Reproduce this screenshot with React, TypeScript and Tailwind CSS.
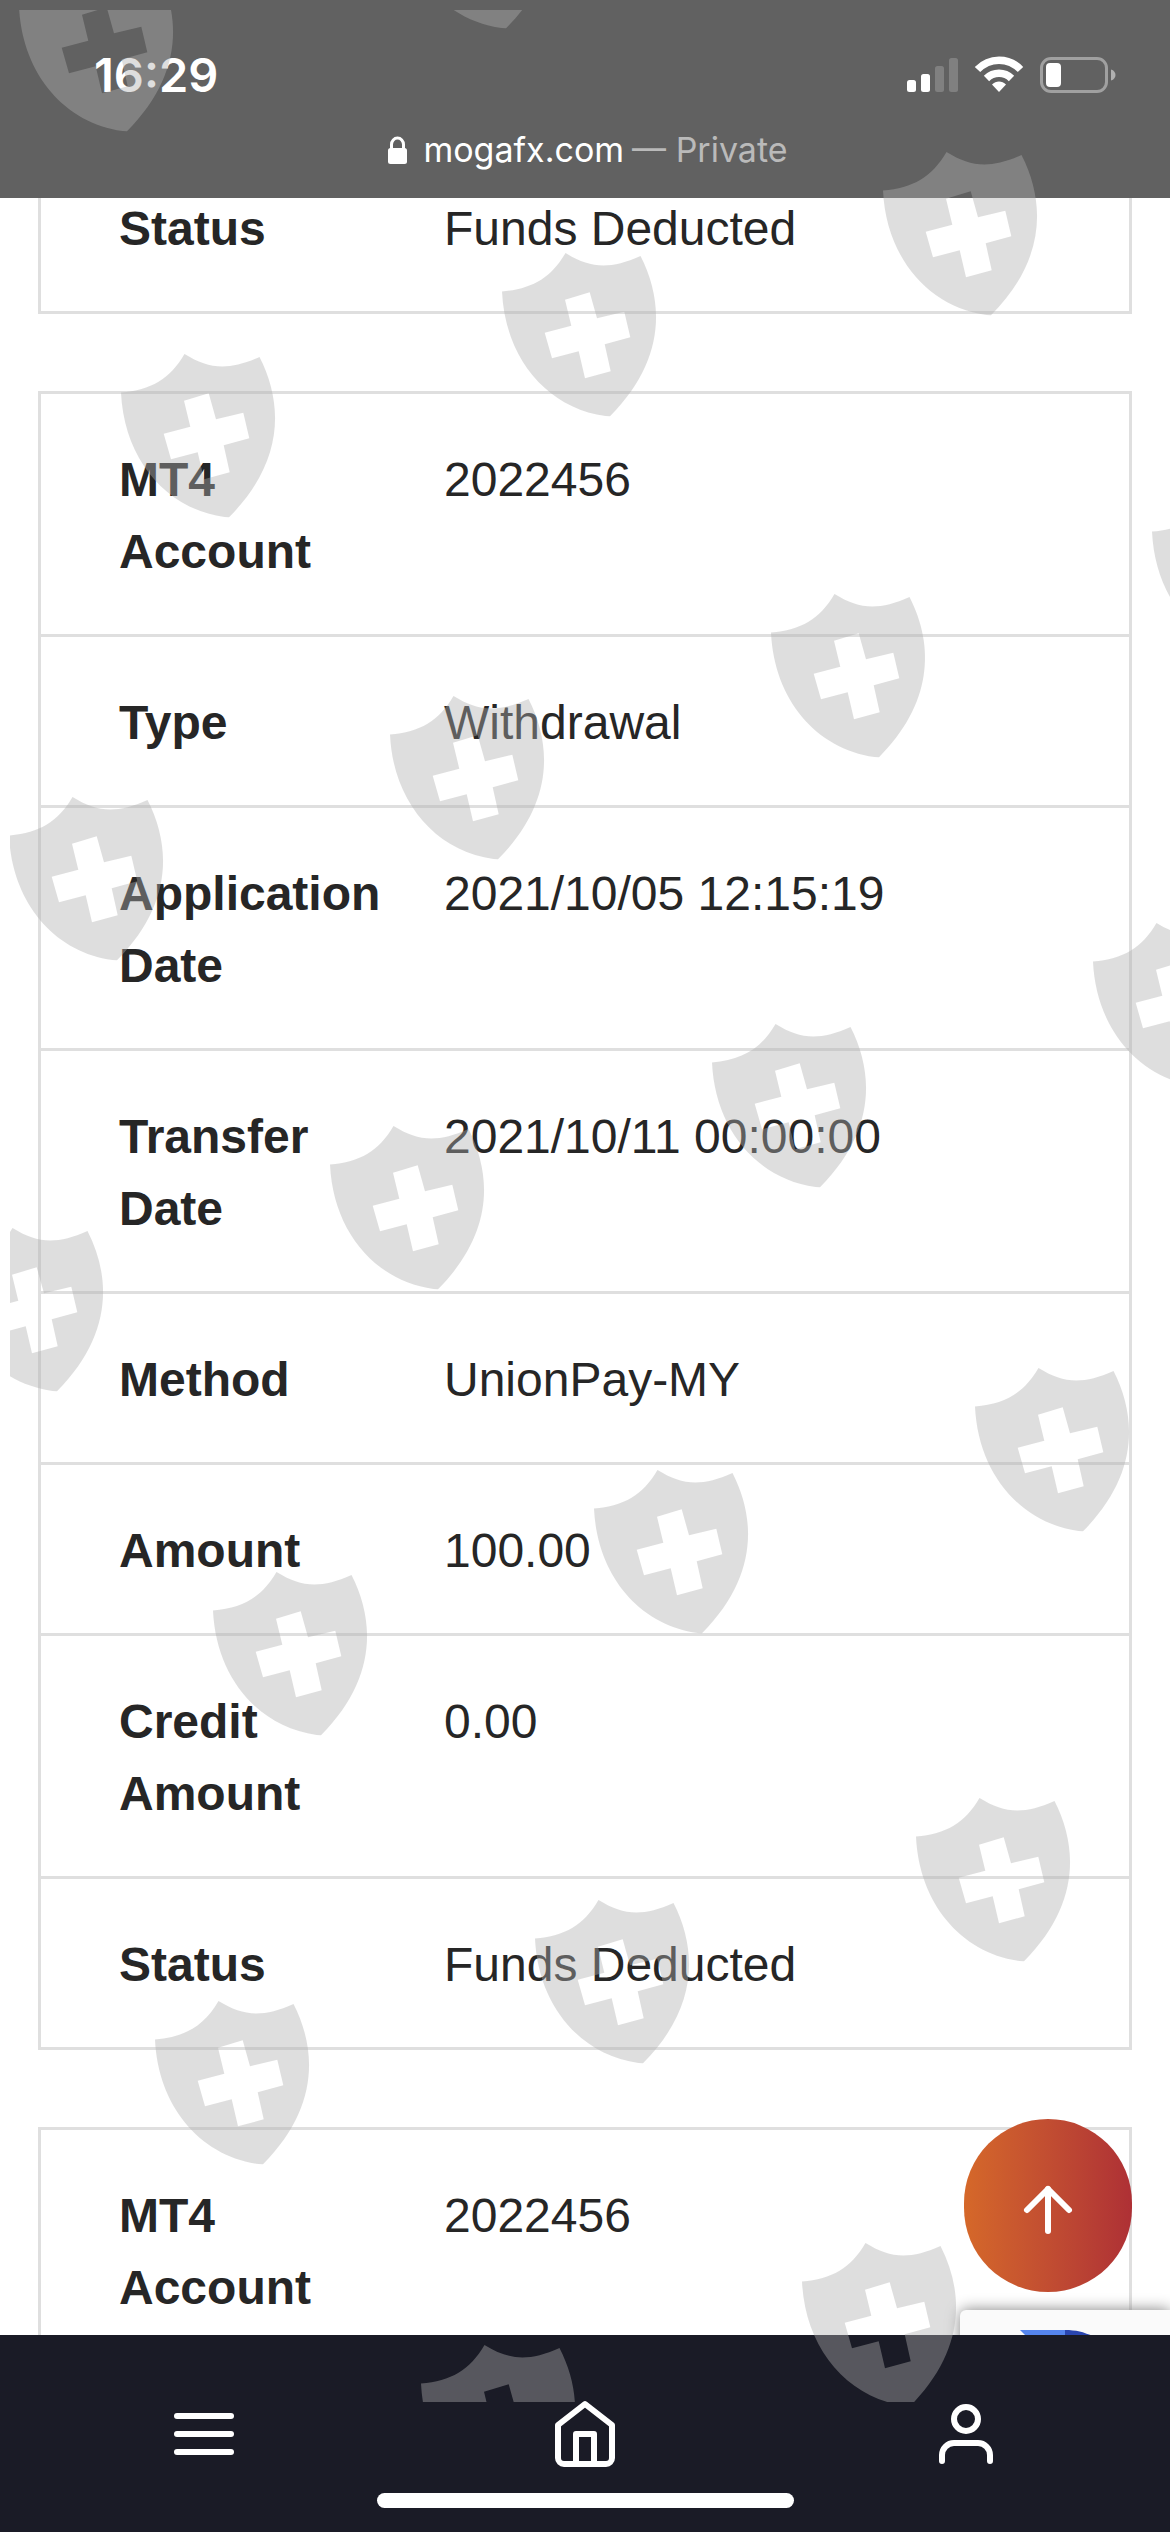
import { FiArrowUp, FiHome, FiMenu, FiUser } from "react-icons/fi";

type Row = { label: string; value: string };

const transaction: Row[] = [
  { label: "MT4 Account", value: "2022456" },
  { label: "Type", value: "Withdrawal" },
  { label: "Application Date", value: "2021/10/05 12:15:19" },
  { label: "Transfer Date", value: "2021/10/11 00:00:00" },
  { label: "Method", value: "UnionPay-MY" },
  { label: "Amount", value: "100.00" },
  { label: "Credit Amount", value: "0.00" },
  { label: "Status", value: "Funds Deducted" },
];

const shields = [
  [19, -32], [398, -135],
  [121, 354], [502, 253], [883, 152],
  [9, 797], [390, 696], [771, 594], [1152, 493],
  [-51, 1228], [330, 1126], [712, 1024], [1093, 923],
  [213, 1572], [594, 1470], [975, 1368],
  [155, 2001], [535, 1900], [916, 1798],
  [421, 2345], [802, 2243],
];

function Watermark() {
  return (
    <div className="pointer-events-none absolute top-[10px] right-0 bottom-[130px] left-[10px] z-40 overflow-hidden" aria-hidden="true">
      <svg className="size-full text-[#b0b0b0]/41" fill="currentColor">
        <defs>
          <path
            id="shield"
            fillRule="evenodd"
            d="M0 38.5C30 36 49 25 63.500 0C88 15 107 17 138.500 3C164 53 161 110 108 163.300L103.500 163C45 155 3 105 0 38.500ZM63 46.700L69.300 72.700L42.700 79.700L50 105.300L76.700 98.300L83 125.300L108.700 118.300L102.700 91.300L128.300 84.300L122.300 58.700L95 65.300L87.700 39.300Z"
          />
        </defs>
        {shields.map(([x, y]) => (
          <use key={`${x}:${y}`} href="#shield" x={x - 10} y={y - 10} />
        ))}
      </svg>
    </div>
  );
}

function StatusIcons() {
  return (
    <svg className="h-[38px] w-[210px]" viewBox="0 0 210 38" fill="#fff" aria-hidden="true">
      <rect x="0" y="24" width="9" height="12" rx="2.500" />
      <rect x="14" y="18" width="9" height="18" rx="2.500" />
      <rect x="28" y="10" width="9" height="26" rx="2.500" opacity="0.2" />
      <rect x="42" y="2" width="9" height="34" rx="2.500" opacity="0.2" />
      <g fill="none" stroke="#fff" strokeWidth="7.500">
        <path d="M70.500 13.500C82.500 1 101.500 1 113.500 13.500" />
        <path d="M79.500 22.500C86.500 15.500 97.500 15.500 104.500 22.500" />
      </g>
      <path d="M85 28.500C89 24.500 95 24.500 99 28.500L92 36Z" />
      <rect x="134.500" y="2.500" width="65" height="33" rx="9.500" fill="none" stroke="#fff" strokeOpacity="0.4" strokeWidth="3" />
      <rect x="139" y="7" width="15" height="24" rx="4" />
      <path d="M204 13.500C210 15 210 23 204 24.500Z" opacity="0.5" />
    </svg>
  );
}

function BrowserBar() {
  return (
    <header className="absolute inset-x-0 top-0 z-20 h-[198px] bg-[#616161] font-[Inter,sans-serif] text-white">
      <div className="flex items-center justify-between pt-[46px] pr-[53px] pl-[94px]">
        <time className="text-[47px] leading-[58px] font-semibold">16:29</time>
        <StatusIcons />
      </div>
      <div className="mt-[24px] flex items-center justify-center pl-[6px] text-[34px] leading-[44px]">
        <svg className="mr-4 h-[28px] w-[19px]" viewBox="0 0 19 28" aria-hidden="true">
          <rect x="0" y="12" width="19" height="16" rx="2.500" fill="#fff" />
          <path d="M3.500 14V8.500a6 6.500 0 0 1 12 0V14" fill="none" stroke="#fff" strokeWidth="3" />
        </svg>
        <span>mogafx.com</span>
        <span className="ml-2 text-[#bababa]">— Private</span>
      </div>
    </header>
  );
}

function TransactionTable({ rows }: { rows: Row[] }) {
  return (
    <table className="w-full border-separate border-spacing-0 border-3 border-[#dfdfdf] text-left text-[48px] leading-[72px] text-[#262626]">
      <tbody>
        {rows.map((row) => (
          <tr key={row.label} className="group align-top">
            <th scope="row" className="w-[364px] border-b-3 border-[#dfdfdf] pt-[50px] pb-[46px] pl-[78px] font-bold group-last:border-b-0">
              {row.label}
            </th>
            <td className="border-b-3 border-[#dfdfdf] pt-[50px] pb-[46px] pl-[39px] group-last:border-b-0">{row.value}</td>
          </tr>
        ))}
      </tbody>
    </table>
  );
}

function CaptchaBadge() {
  return (
    <div className="absolute right-0 bottom-0 h-[222px] w-[210px] rounded-l-md bg-[#fafafa] shadow-[0_0_15px_#808080]">
      <svg className="mt-[20px] ml-[60px] h-[30px] w-[90px]" viewBox="0 0 90 30" aria-hidden="true">
        <path d="M0 0H45V30H30Z" fill="#5585ee" />
        <path d="M45 0C56 0 64 2 72 6L60 30H45Z" fill="#2a46b0" />
      </svg>
    </div>
  );
}

function TabBar() {
  return (
    <nav className="absolute inset-x-0 bottom-0 z-20 flex h-[197px] flex-col items-center bg-[#1a1b26] pt-[63px] text-white" aria-label="Primary">
      <div className="flex w-full justify-between px-42">
        <button type="button" aria-label="Menu">
          <FiMenu className="size-[72px]" />
        </button>
        <a href="#home" aria-label="Home">
          <FiHome className="size-[72px]" />
        </a>
        <a href="#account" aria-label="Account">
          <FiUser className="size-[72px]" />
        </a>
      </div>
      <span className="mt-[23px] h-[15px] w-[417px] rounded-full bg-white" />
    </nav>
  );
}

export default function App() {
  return (
    <div className="relative h-screen overflow-hidden bg-white font-['Liberation_Sans',Arial,sans-serif]">
      <BrowserBar />
      <main className="flex flex-col gap-[77px] px-[38px] pt-[140px]">
        <TransactionTable rows={transaction.slice(-1)} />
        <TransactionTable rows={transaction} />
        <TransactionTable rows={transaction.slice(0, 1)} />
      </main>
      <button
        type="button"
        aria-label="Back to top"
        className="absolute right-[38px] bottom-[240px] z-10 flex h-[173px] w-[168px] items-center justify-center rounded-full bg-linear-to-r from-[#d56829] to-[#ae3035] pt-2 text-white"
      >
        <FiArrowUp className="size-[72px]" />
      </button>
      <CaptchaBadge />
      <TabBar />
      <Watermark />
    </div>
  );
}
